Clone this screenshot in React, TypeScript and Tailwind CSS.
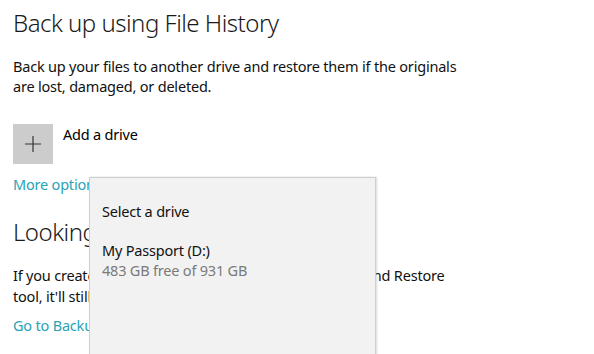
export default function App() {
  const font = { fontFamily: '"Noto Sans", "Open Sans", sans-serif' };
  return (
    <div className="relative w-[594px] h-[354px] overflow-hidden bg-white text-[#000]" style={font}>
      <div className="pl-[13px] pt-[6px]">
        <h1 className="text-[24px] leading-[34px] font-light text-[#1a1a1a] tracking-[-0.5px]">Back up using File History</h1>
        <p className="mt-[16px] text-[14.5px] leading-[20px] text-[#111] tracking-[-0.2px] w-[462px]">
          Back up your files to another drive and restore them if the originals are lost, damaged, or deleted.
        </p>
        <div className="mt-[28px] flex items-start gap-[10px]">
          <div className="w-[40px] h-[40px] bg-[#cccccc] flex items-center justify-center">
            <svg width="18" height="18" viewBox="0 0 18 18">
              <path d="M9 1v16M1 9h16" stroke="#333" strokeWidth="1.2" />
            </svg>
          </div>
          <span className="text-[14.5px] leading-[20px] tracking-[-0.2px]">Add a drive</span>
        </div>
        <a className="block mt-[10px] text-[14.5px] leading-[20px] text-[#2aa3b3] tracking-[-0.2px]">More options</a>
        <h2 className="mt-[21px] text-[24px] leading-[34px] font-light text-[#1a1a1a] tracking-[-0.5px]">Looking for an older backup?</h2>
        <p className="mt-[16px] text-[14.5px] leading-[21px] text-[#111] tracking-[-0.2px] w-[462px]">
          If you created a backup using the Windows 7 Backup and Restore tool, it'll still work in Windows 10.
        </p>
        <a className="block mt-[8px] text-[14.5px] leading-[20px] text-[#2aa3b3] tracking-[-0.2px]">Go to Backup and Restore (Windows 7)</a>
      </div>
      <div className="absolute left-[89px] top-[177px] w-[287px] h-[200px] bg-[#f2f2f2] border border-[#cfcfcf] shadow-[1px_0_2px_rgba(0,0,0,0.15)] pl-[12px] pt-[23px]">
        <div className="text-[14.5px] leading-[20px] tracking-[-0.2px] text-[#111]">Select a drive</div>
        <div className="mt-[19px] text-[14.5px] leading-[20px] tracking-[-0.2px] text-[#111]">My Passport (D:)</div>
        <div className="text-[14.5px] leading-[20px] tracking-[-0.2px] text-[#7a7a7a]">483 GB free of 931 GB</div>
      </div>
    </div>
  );
}
